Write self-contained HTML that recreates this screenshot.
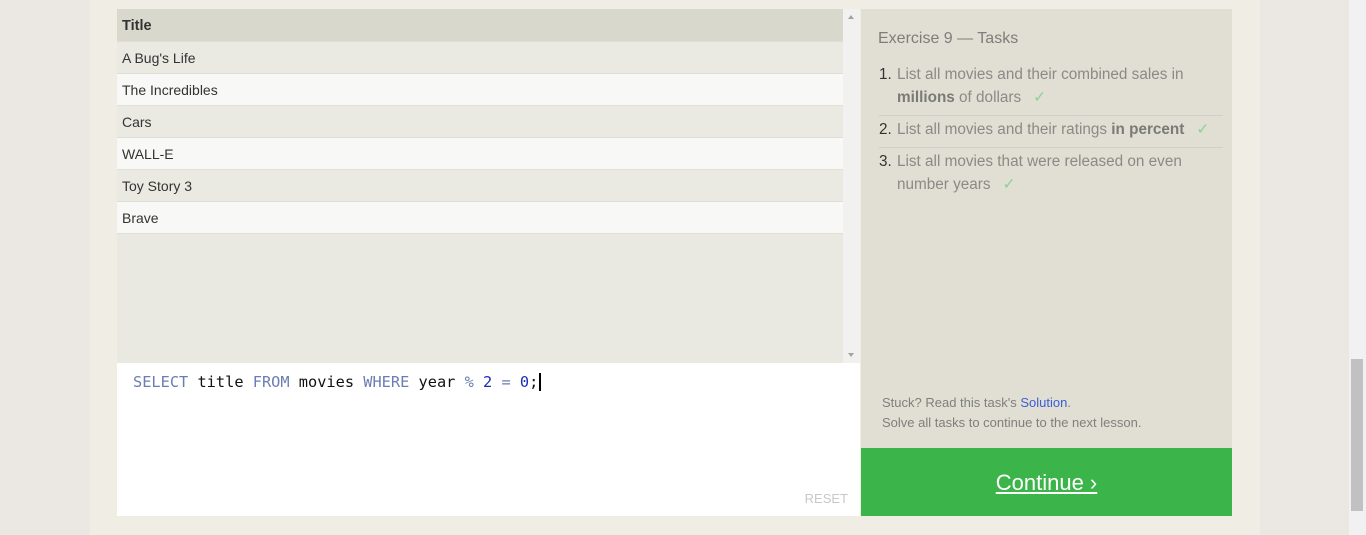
<!DOCTYPE html>
<html><head><meta charset="utf-8"><style>
*{margin:0;padding:0;box-sizing:border-box}
body{width:1366px;height:535px;background:#ebe7e3;font-family:"Liberation Sans",sans-serif;position:relative;overflow:hidden}
#main{position:absolute;left:90px;top:0;width:1170px;height:535px;background:#f0ede5}
#table{position:absolute;left:117px;top:9px;width:726px;height:354px;background:#e9e8e1}
.row{height:32px;line-height:33px;padding-left:5px;font-size:14px;color:#333;border-bottom:1px solid #e0ded6}
.hd{background:#d9d8cc;font-weight:bold;height:33px;line-height:35px;font-size:14.5px;color:#333}
.a{background:#eae9e2}.b{background:#f8f8f7}
#sb{position:absolute;left:843px;top:9px;width:17px;height:354px;background:#f1f1f0}
#ed{position:absolute;left:117px;top:363px;width:743px;height:153px;background:#fff}
#code{position:absolute;left:16px;top:10px;font-family:"DejaVu Sans Mono","Liberation Mono",monospace;font-size:15.3px;color:#111;white-space:pre}
.k{color:#6b7db3}.n{color:#1a2bb5}
#reset{position:absolute;right:12px;bottom:10px;font-size:13px;color:#c8c8c8}
#panel{position:absolute;left:861px;top:9px;width:371px;height:439px;background:#e1dfd3}
#panel h3{position:absolute;left:17px;top:21px;font-weight:normal;font-size:16px;color:#7d7d7a}
ol{position:absolute;left:18px;top:54px;width:344px;list-style:none}
li{font-size:15.3px;color:#8a8a86;line-height:23px;padding:0 0 6px 18px;position:relative;margin-bottom:2px}
li span.num{position:absolute;left:0;color:#333}
li b{color:#7a7a77}
.ck{color:#8fd196;margin-left:12px}
.sep{border-bottom:1px solid #d2d0c6}
#stuck{position:absolute;left:21px;top:384px;font-size:13px;color:#7f7f7c;line-height:20px}
#stuck a{color:#3b5ed6;text-decoration:none}
#btn{position:absolute;left:861px;top:448px;width:371px;height:68px;background:#3bb54a;color:#fff;text-align:center;line-height:70px;font-size:22px;text-decoration:underline}
#vs{position:absolute;left:1349px;top:0;width:17px;height:535px;background:#f1f1f1}
#th{position:absolute;left:2px;top:359px;width:12px;height:152px;background:#c1c1c1}
</style></head><body>
<div id="main"></div>
<div id="table">
<div class="row hd">Title</div>
<div class="row a">A Bug's Life</div>
<div class="row b">The Incredibles</div>
<div class="row a">Cars</div>
<div class="row b">WALL-E</div>
<div class="row a">Toy Story 3</div>
<div class="row b">Brave</div>
</div>
<div id="sb"><div style="position:absolute;left:5px;top:6px;border:3.5px solid transparent;border-bottom:4px solid #a3a3a3;border-top:0"></div><div style="position:absolute;left:5px;bottom:6px;border:3.5px solid transparent;border-top:4px solid #a3a3a3;border-bottom:0"></div></div>
<div id="ed"><div id="code"><span class="k">SELECT</span> title <span class="k">FROM</span> movies <span class="k">WHERE</span> year <span class="k">%</span> <span class="n">2</span> <span class="k">=</span> <span class="n">0</span>;<span style="border-left:2px solid #000;margin-left:1px"></span></div><div id="reset">RESET</div></div>
<div id="panel">
<h3>Exercise 9 — Tasks</h3>
<ol>
<li class="sep"><span class="num">1.</span>List all movies and their combined sales in <b>millions</b> of dollars<span class="ck">✓</span></li>
<li class="sep"><span class="num">2.</span>List all movies and their ratings <b>in percent</b><span class="ck">✓</span></li>
<li><span class="num">3.</span>List all movies that were released on even number years<span class="ck">✓</span></li>
</ol>
<div id="stuck">Stuck? Read this task's <a>Solution</a>.<br>Solve all tasks to continue to the next lesson.</div>
</div>
<div id="btn">Continue ›</div>
<div id="vs"><div id="th"></div></div>
</body></html>
